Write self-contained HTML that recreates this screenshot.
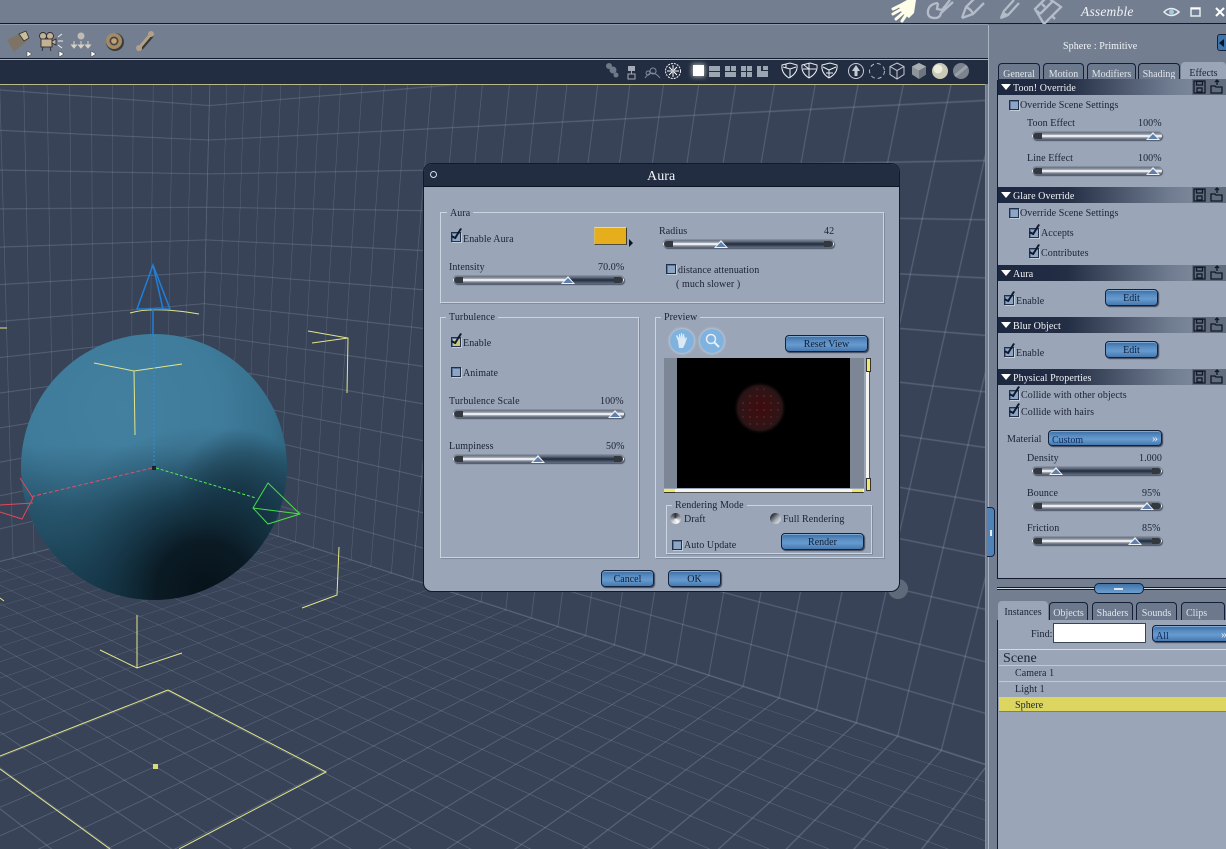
<!DOCTYPE html>
<html><head><meta charset="utf-8"><title>Aura</title>
<style>
html,body{margin:0;padding:0;background:#737f90;width:1226px;height:849px;overflow:hidden}
#r{position:relative;width:1226px;height:849px;overflow:hidden;background:#737f90;font:10px/12px "Liberation Serif",serif;color:#1b2335}
#r div,#r span,#r svg{position:absolute}
.t{white-space:nowrap;color:#1b2335;margin-top:4px;letter-spacing:.08px}
.w{color:#f2f4f7}
.vp{left:0;top:85px;width:986px;height:764px;overflow:hidden;background:#384357}
.g{transform-origin:0 0;background-image:linear-gradient(to right,rgba(160,174,194,.37) 1px,transparent 1px),linear-gradient(to bottom,rgba(160,174,194,.37) 1px,transparent 1px);background-size:40px 40px}
.wl{background-image:linear-gradient(to right,rgba(160,174,194,.3) 1px,transparent 1px),linear-gradient(to bottom,rgba(160,174,194,.3) 1px,transparent 1px)}
.box{border:1px solid #ccd4df;box-shadow:1px 1px 0 #7f8a9b}
.lg{background:#9aa5b7;padding:0 3px;white-space:nowrap}
.btn{background:linear-gradient(#3a6ca2,#5a8ec3 35%,#679ace 60%,#4679b0);border:1px solid #14233c;border-radius:4px;box-shadow:1px 1px 1px #3b4557,inset 0 1px 0 #7ea8d2;text-align:center;color:#0e1c33;box-sizing:border-box;line-height:18px}
.cb{width:8px;height:8px;border:1px solid #22304a;background:#8ea6c6;box-shadow:inset 1px 1px 0 #5f769a,1px 1px 0 #c3ccd9}
.ck::after{content:"";position:absolute;left:2px;top:-6px;width:5px;height:12px;border-right:2px solid #101a2c;border-bottom:2px solid #101a2c;transform:rotate(24deg) skewX(-8deg);box-sizing:border-box}
.sl{height:8px;border-radius:4px;background:linear-gradient(#667080,#8f97a5 28%,#fbfcfd 46%,#f2f4f7 56%,#8c94a1 72%,#4f5868);box-shadow:1px 1px 1px #4b5465,0 -1px 0 #848e9e}
.sl i{display:block;position:absolute;top:1px;bottom:1px;background:linear-gradient(#6a7587,#1f2b3e 50%,#566174)}
.sl b{position:absolute;left:1px;top:1px;width:9px;height:6px;background:#33383f;border-radius:3px 0 0 3px}
.sl u{position:absolute;right:1px;top:1px;width:9px;height:6px;background:#33383f;border-radius:0 3px 3px 0}
.sl s{position:absolute;top:0;width:0;height:0;margin-left:-2px;border-left:7px solid transparent;border-right:7px solid transparent;border-bottom:8px solid #eef1f5}
.sl s::after{content:"";position:absolute;left:-5px;top:2px;border-left:5px solid transparent;border-right:5px solid transparent;border-bottom:5px solid #5f7fae}
.hd{left:998px;width:228px;height:16px;background:linear-gradient(to right,#1c2740,#232e45 30%,#6f7b8f 75%,#8b96a8)}
.hd::before{content:"";position:absolute;left:3px;top:5px;border-left:5px solid transparent;border-right:5px solid transparent;border-top:6px solid #fff}
.ic{left:194px;top:0;width:34px;height:16px;background:#606b7c}
.tab{top:63px;height:17px;background:#6c788c;border:1px solid #14203a;border-bottom:0;border-radius:4px 4px 0 0;box-sizing:border-box;color:#e0e4ea;text-align:center;line-height:21px}
.on{background:#9aa5b7;color:#1b2335;border-color:#9aa5b7}
</style></head><body>
<div id="r">

<!-- viewport -->
<div class="vp"><div style="left:0;top:-85px;width:986px;height:849px">
<div class="g wl" style="left:0;top:0;width:1900px;height:1000px;transform:matrix3d(-0.46865,-0.0645,0,-0.0003275, -0.022,-0.8,0,-0.0002, 0,0,1,0, 199,511,0,1)"></div>
<div class="g wl" style="left:0;top:0;width:1900px;height:1000px;transform:matrix3d(0.29225,-0.0705,0,-0.000369, -0.022,-0.8,0,-0.0002, 0,0,1,0, 199,511,0,1)"></div>
<div class="g" style="left:0;top:0;width:2000px;height:2000px;background-color:#384357;transform:matrix3d(-0.46865,-0.0645,0,-0.0003275, 0.29225,-0.0705,0,-0.000369, 0,0,1,0, 199,511,0,1)"></div>

<svg style="left:0;top:0" width="986" height="849" viewBox="0 0 986 849">
<defs>
<radialGradient id="s1" gradientUnits="userSpaceOnUse" cx="125" cy="410" r="175"><stop offset="0" stop-color="#437f9f"/><stop offset=".55" stop-color="#3f7c9b"/><stop offset=".85" stop-color="#356f8c"/><stop offset="1" stop-color="#2c6079"/></radialGradient>
<radialGradient id="s2" gradientUnits="userSpaceOnUse" cx="205" cy="590" r="165"><stop offset="0" stop-color="#07121a"/><stop offset=".3" stop-color="#0a1922" stop-opacity=".96"/><stop offset=".6" stop-color="#123040" stop-opacity=".6"/><stop offset=".82" stop-color="#18394b" stop-opacity=".2"/><stop offset="1" stop-color="#1a3a4c" stop-opacity="0"/></radialGradient>
<radialGradient id="s3" gradientUnits="userSpaceOnUse" cx="240" cy="490" r="62"><stop offset="0" stop-color="#0d1e28" stop-opacity=".55"/><stop offset=".6" stop-color="#0d1e28" stop-opacity=".28"/><stop offset="1" stop-color="#0d1e28" stop-opacity="0"/></radialGradient>
<linearGradient id="s4" gradientUnits="userSpaceOnUse" x1="0" y1="445" x2="0" y2="600"><stop offset="0" stop-color="#123040" stop-opacity="0"/><stop offset=".4" stop-color="#123040" stop-opacity=".45"/><stop offset="1" stop-color="#123040" stop-opacity=".75"/></linearGradient>
</defs>
<circle cx="898" cy="589" r="10" fill="#5f6979"/>
<circle cx="154" cy="467" r="133" fill="url(#s1)"/>
<circle cx="154" cy="467" r="133" fill="url(#s4)"/>
<circle cx="154" cy="467" r="133" fill="url(#s3)"/>
<circle cx="154" cy="467" r="133" fill="url(#s2)"/>
<g fill="none" stroke="#e3e58a" stroke-width="1">
<path d="M94 363L134 371L182 364M134 371L135 435"/>
<path d="M130 313Q153 306 199 314"/>
<path d="M308 331L348 338L347 393M312 343L348 338"/>
<path d="M137 615L137 668M100 650L137 668L182 653"/>
<path d="M339 547L337 595L302 608"/>
<path d="M0 328L7 328M0 598L4 601"/>
<path d="M168 690L326 772L179 849M168 690L0 756M0 769L110 849"/>
</g>
<rect x="153" y="764" width="5" height="5" fill="#d9da7d"/>
<g fill="none" stroke="#1f7fd8" stroke-width="1.500">
<path d="M153 265L137 309L170 309Z M153 265L163 309"/>
<path d="M153 309V335"/>
<path d="M154 335V467" stroke-dasharray="2 2" stroke="#2f8fdc" stroke-width="1"/>
</g>
<path d="M152 468L30 497" fill="none" stroke="#e0506a" stroke-dasharray="4 2"/>
<path d="M20 478L33 498L22 519L0 512M0 505L33 503" fill="none" stroke="#e2485c"/>
<path d="M156 468L256 498" fill="none" stroke="#4ff04f" stroke-dasharray="3 2"/>
<path d="M268 483L300 514L268 524L253 508ZM253 508L300 514" fill="none" stroke="#46e046"/>
<rect x="152" y="466" width="4" height="4" fill="#1a2230"/>
</svg>
</div></div>

<!-- top bars -->
<div style="left:0;top:23px;width:1226px;height:1px;background:#0f1a2c"></div>
<div style="left:0;top:24px;width:988px;height:1px;background:#8f9aaa"></div>
<div style="left:0;top:58px;width:988px;height:1px;background:#0f1a2c"></div>
<div style="left:0;top:59px;width:988px;height:1px;background:#a5afbd"></div>
<div style="left:0;top:60px;width:988px;height:24px;background:#222d41"></div>
<div style="left:0;top:84px;width:986px;height:1px;background:#b9ba8b"></div>
<div style="left:985px;top:84px;width:1px;height:765px;background:#8f9170"></div>

<!-- left toolbar icons -->
<svg style="left:0;top:26px" width="170" height="32" viewBox="0 0 170 32">
<path d="M7 14L20 7L28 14L14 26Z" fill="#7d7465"/><path d="M19 8L26 5L29 12L24 15Z" fill="#c9bd9c" stroke="#2f2f2f" stroke-width=".8"/>
<path d="M27 25v6l5-3z" fill="#fff" stroke="#333" stroke-width=".5"/>
<g fill="#c4b296" stroke="#2f2d2d" stroke-width=".9"><circle cx="43" cy="10" r="3.500"/><circle cx="50" cy="10" r="3.500"/><rect x="41" y="13" width="11" height="8"/><path d="M52 15l4-2v6l-4-2zM43 21l-1 4M50 21l1 4"/></g>
<path d="M58 11l4-3M58 15h5M58 19l4 3" stroke="#eee" fill="none"/>
<path d="M59 25v6l5-3z" fill="#fff" stroke="#333" stroke-width=".5"/>
<circle cx="81" cy="10" r="3.500" fill="#c0bcb4"/><path d="M74 15v5M71.500 19l2.500 3 2.500-3zM81 15v5M78.500 19l2.500 3 2.500-3zM88 15v5M85.500 19l2.500 3 2.500-3z" stroke="#d6d1c4" fill="#d6d1c4"/>
<path d="M91 25v6l5-3z" fill="#fff" stroke="#333" stroke-width=".5"/>
<circle cx="115" cy="16" r="9" fill="#3e3d3c"/><circle cx="114" cy="15" r="8" fill="#a48b66"/><circle cx="114" cy="15" r="4.500" fill="#4a4641"/><circle cx="114" cy="15" r="2.800" fill="#bda27a"/>
<path d="M141 22L152 9" stroke="#3a3632" stroke-width="4.500"/><path d="M140 21L151 8" stroke="#b3a088" stroke-width="3"/><circle cx="139" cy="22" r="3" fill="#b3a088"/><circle cx="151" cy="8" r="3" fill="#b3a088"/>
</svg>

<!-- top right icons -->
<svg style="left:885px;top:0" width="341" height="24" viewBox="0 0 341 24">
<g fill="#fdfde8"><path d="M13 5L22 0H31L29 13L24 18L17 13Z"/><path d="M14 6L8 9M15 10L8 14M18 13L11 19M21 15L17 21" stroke="#fdfde8" stroke-width="3" stroke-linecap="round"/></g>
<g fill="none" stroke="#b4bcc9" stroke-width="2.300">
<path d="M53 3Q44 4 43 11T50 18Q55 18 56 13L68 2M53 3L52 9L57 10L65 0"/>
<path d="M77 18L81 7L90 -2M77 18L88 14L99 3M81 7Q86 9 88 14"/>
<path d="M116 18L119 11L129 0M116 18L123 15L134 3"/>
<path d="M150 9L162 -3L176 7L159 24ZM155 14L168 1M157 4L160 7M167 16L170 19M152 11L155 14"/>
</g>
<path d="M115 19L118 12L123 14L121 17Z" fill="#b4bcc9"/>
<g fill="none"><path d="M279 12Q286 5 294 12Q286 19 279 12Z" stroke="#e9edf3" stroke-width="1.500"/><circle cx="286.500" cy="12" r="2.500" fill="#9ecbe0"/>
<rect x="306" y="8" width="9" height="8" stroke="#e8ebf0" stroke-width="1.500"/><path d="M306 8.500h9" stroke="#fff" stroke-width="2"/>
<path d="M331 8l8 8M339 8l-8 8" stroke="#fff" stroke-width="2"/></g>
</svg>
<span class="t" style="left:1081px;top:1px;font:italic 13.500px/14px 'Liberation Serif',serif;color:#eef1f5;letter-spacing:.2px">Assemble</span>

<!-- viewport toolbar icons -->
<svg style="left:600px;top:60px" width="388" height="24" viewBox="0 0 388 24">
<defs><filter id="gl" x="-60%" y="-60%" width="220%" height="220%"><feGaussianBlur stdDeviation="2.500"/></filter></defs>
<g fill="#6f7987"><circle cx="9" cy="6" r="3"/><circle cx="13" cy="10" r="3.500"/><circle cx="16" cy="15" r="2.500"/></g>
<rect x="28" y="6" width="7" height="5" fill="#a3abb8"/><rect x="28" y="14" width="7" height="5" fill="none" stroke="#a3abb8"/><path d="M31.500 11v3" stroke="#a3abb8"/>
<path d="M45 18Q52 8 60 18M48 15a2 2 0 1 1 .1 0M53 14a3 3 0 1 1 .1 0" stroke="#7f8998" fill="none"/>
<g fill="none" stroke="#eef1f5" stroke-dasharray="2 1"><circle cx="73" cy="11" r="7.500"/></g><path d="M69 7l3 3M77 7l-3 3M69 15l3-3M77 15l-3-3M73 5v12M67 11h12" stroke="#fff" fill="none"/>
<rect x="92" y="4" width="13" height="13" fill="#fffbe0" filter="url(#gl)" opacity=".6"/>
<rect x="93" y="5" width="11" height="11" fill="#fff"/>
<g fill="#9ca5b2"><rect x="109" y="6" width="11" height="5"/><rect x="109" y="12" width="11" height="5"/>
<rect x="125" y="6" width="5" height="5"/><rect x="131" y="6" width="5" height="5"/><rect x="125" y="12" width="11" height="5"/>
<rect x="141" y="6" width="5" height="5"/><rect x="147" y="6" width="5" height="5"/><rect x="141" y="12" width="5" height="5"/><rect x="147" y="12" width="5" height="5"/>
<path d="M157 6h4v5h7v6h-11zM163 6h5v4h-5z"/></g>
<g fill="none" stroke="#e9edf2" stroke-width="1">
<path d="M182 5L190 3L197 5Q198 13 189 18Q181 13 182 5ZM183 7L190 9L196 7M190 9V18M186 4V8"/>
<path d="M202 5L210 3L217 5Q218 13 209 18Q201 13 202 5ZM203 9L216 9M209 3V18M204 5L209 9"/>
<path d="M222 5L230 3L237 5Q238 13 229 18Q221 13 222 5ZM229 10L223 7M229 10L236 7M229 10V18M226 13H233"/>
</g>
<circle cx="256" cy="11" r="7.500" fill="none" stroke="#c6ccd6"/><path d="M256 5l4 6h-2.500v5h-3v-5H252z" fill="#c6ccd6"/>
<circle cx="277" cy="11" r="7.500" fill="none" stroke="#aeb6c3" stroke-dasharray="4 3"/>
<path d="M297 3l7 3.500v8L297 19l-7-4.500v-8zM290 6.500l7 4 7-4M297 10.500V19" fill="none" stroke="#c6ccd6"/>
<path d="M319 3l7 3.500v8L319 19l-7-4.500v-8z" fill="#8e949c"/><path d="M312 6.500l7 4 7-4-7-3.500z" fill="#a9aeb3"/><path d="M319 10.500V19l7-4.500v-8z" fill="#6f757e"/>
<circle cx="340" cy="11" r="8" fill="#c9c9b8"/><circle cx="338" cy="9" r="4.500" fill="#ecebdc"/>
<circle cx="361" cy="11" r="8" fill="#7b838e"/><path d="M355 16L367 6" stroke="#99a0a8" stroke-width="3"/>
</svg>

<!-- right panel -->
<div style="left:988px;top:25px;width:1px;height:824px;background:#a9b2bf"></div>
<span class="t w" style="left:1063px;top:37px">Sphere : Primitive</span>
<div style="left:1217px;top:34px;width:12px;height:17px;background:#3f74aa;border:1px solid #14233c;border-radius:3px;box-sizing:border-box"></div>
<div style="left:1219px;top:39px;border-top:4px solid transparent;border-bottom:4px solid transparent;border-right:5px solid #0c1526"></div>
<div style="left:987px;top:507px;width:8px;height:50px;background:#4f82b6;border:1px solid #14233c;border-left:0;border-radius:0 4px 4px 0;box-sizing:border-box"></div>
<div style="left:990px;top:530px;width:2px;height:6px;background:#e9eef5"></div>

<div style="left:997px;top:80px;width:229px;height:499px;background:#9aa5b7;border-left:1px solid #111b2d;border-bottom:1px solid #111b2d;box-sizing:border-box"></div>
<div class="tab" style="left:998px;width:42px">General</div>
<div class="tab" style="left:1043px;width:41px">Motion</div>
<div class="tab" style="left:1087px;width:49px">Modifiers</div>
<div class="tab" style="left:1138px;width:42px">Shading</div>
<div class="tab on" style="left:1181px;width:45px;top:62px;height:18px">Effects</div>

<div class="hd" style="top:79px"><div class="ic"></div></div>
<span class="t w" style="left:1013px;top:79px">Toon! Override</span>
<div class="hd" style="top:187px"><div class="ic"></div></div>
<span class="t w" style="left:1013px;top:187px">Glare Override</span>
<div class="hd" style="top:265px"><div class="ic"></div></div>
<span class="t w" style="left:1013px;top:265px">Aura</span>
<div class="hd" style="top:317px"><div class="ic"></div></div>
<span class="t w" style="left:1013px;top:317px">Blur Object</span>
<div class="hd" style="top:369px"><div class="ic"></div></div>
<span class="t w" style="left:1013px;top:369px">Physical Properties</span>
<svg style="left:1192px;top:79px" width="34" height="310" viewBox="0 0 34 310">
<defs><g id="ii" fill="none" stroke="#10182a" stroke-width="1.300"><rect x="2" y="2" width="11" height="12"/><rect x="4.500" y="2.500" width="6" height="3.500"/><rect x="5" y="9" width="5" height="4"/><path d="M19 14V7h4l1 1h6v6zM25 6V1M23 3l2-2 2 2" /></g></defs>
<use href="#ii"/><use href="#ii" y="108"/><use href="#ii" y="186"/><use href="#ii" y="238"/><use href="#ii" y="290"/>
</svg>

<div class="cb" style="left:1009px;top:100px"></div><span class="t" style="left:1020px;top:96px">Override Scene Settings</span>
<span class="t" style="left:1027px;top:114px">Toon Effect</span><span class="t" style="left:1138px;top:114px">100%</span>
<div class="sl" style="left:1032px;top:132px;width:130px"><b></b><s style="left:116px"></s></div>
<span class="t" style="left:1027px;top:149px">Line Effect</span><span class="t" style="left:1138px;top:149px">100%</span>
<div class="sl" style="left:1032px;top:167px;width:130px"><b></b><s style="left:116px"></s></div>

<div class="cb" style="left:1009px;top:208px"></div><span class="t" style="left:1020px;top:204px">Override Scene Settings</span>
<div class="cb ck" style="left:1029px;top:228px"></div><span class="t" style="left:1041px;top:224px">Accepts</span>
<div class="cb ck" style="left:1029px;top:248px"></div><span class="t" style="left:1041px;top:244px">Contributes</span>

<div class="cb ck" style="left:1004px;top:295px"></div><span class="t" style="left:1016px;top:292px">Enable</span>
<div class="btn" style="left:1105px;top:289px;width:53px;height:17px">Edit</div>
<div class="cb ck" style="left:1004px;top:347px"></div><span class="t" style="left:1016px;top:344px">Enable</span>
<div class="btn" style="left:1105px;top:341px;width:53px;height:17px">Edit</div>

<div class="cb ck" style="left:1009px;top:390px"></div><span class="t" style="left:1021px;top:386px">Collide with other objects</span>
<div class="cb ck" style="left:1009px;top:407px"></div><span class="t" style="left:1021px;top:403px">Collide with hairs</span>
<span class="t" style="left:1007px;top:430px">Material</span>
<div class="btn" style="left:1048px;top:430px;width:114px;height:16px;text-align:left;padding-left:3px;color:#0d2a5c;line-height:19px">Custom<span style="right:3px;top:-2px;color:#e9eef5;font-size:12px">&#187;</span></div>
<span class="t" style="left:1027px;top:449px">Density</span><span class="t" style="left:1139px;top:449px">1.000</span>
<div class="sl" style="left:1032px;top:467px;width:130px"><i style="left:24px;right:9px"></i><b></b><u></u><s style="left:19px"></s></div>
<span class="t" style="left:1027px;top:484px">Bounce</span><span class="t" style="left:1142px;top:484px">95%</span>
<div class="sl" style="left:1032px;top:502px;width:130px"><i style="left:115px;right:9px"></i><b></b><u></u><s style="left:110px"></s></div>
<span class="t" style="left:1027px;top:519px">Friction</span><span class="t" style="left:1142px;top:519px">85%</span>
<div class="sl" style="left:1032px;top:537px;width:130px"><i style="left:103px;right:9px"></i><b></b><u></u><s style="left:98px"></s></div>

<div style="left:997px;top:587px;width:229px;height:1px;background:#0f1a2c"></div>
<div style="left:997px;top:588px;width:229px;height:1px;background:#d5dbe3"></div>
<div style="left:997px;top:589px;width:229px;height:1px;background:#0f1a2c"></div>
<div style="left:1094px;top:583px;width:50px;height:11px;background:linear-gradient(#3f74aa,#6c9fd0);border:1px solid #14233c;border-radius:5px;box-sizing:border-box"></div>
<div style="left:1114px;top:588px;width:9px;height:2px;background:#dfe6ef"></div>

<div style="left:997px;top:620px;width:229px;height:229px;background:#9aa5b7;border-left:1px solid #111b2d;box-sizing:border-box"></div>
<div class="tab on" style="left:998px;top:601px;width:50px;height:20px;border-color:#9aa5b7;line-height:21px">Instances</div>
<div class="tab" style="left:1049px;top:602px;width:39px;height:18px">Objects</div>
<div class="tab" style="left:1092px;top:602px;width:41px;height:18px">Shaders</div>
<div class="tab" style="left:1136px;top:602px;width:41px;height:18px">Sounds</div>
<div class="tab" style="left:1181px;top:602px;width:44px;height:18px;text-align:left;padding-left:4px">Clips</div>
<span class="t" style="left:1031px;top:625px">Find:</span>
<div style="left:1053px;top:623px;width:93px;height:20px;background:#fff;border:1px solid #3a4455;box-sizing:border-box"></div>
<div class="btn" style="left:1152px;top:625px;width:80px;height:17px;text-align:left;padding-left:3px;line-height:21px;color:#0d2a5c">All<span style="left:68px;top:-2px;color:#e9eef5;font-size:12px">&#187;</span></div>
<div style="left:999px;top:649px;width:227px;height:1px;background:#d5dbe3"></div>
<span class="t" style="left:1003px;top:647px;font-size:14px;line-height:15px">Scene</span>
<div style="left:999px;top:665px;width:227px;height:1px;background:#c3cad5"></div>
<span class="t" style="left:1015px;top:664px">Camera 1</span>
<div style="left:999px;top:681px;width:227px;height:1px;background:#c3cad5"></div>
<span class="t" style="left:1015px;top:680px">Light 1</span>
<div style="left:999px;top:697px;width:227px;height:15px;background:#dcd55f;border-bottom:1px solid #737f90;box-sizing:border-box"></div>
<span class="t" style="left:1015px;top:696px">Sphere</span>

<!-- dialog -->
<div style="left:423px;top:163px;width:477px;height:429px;background:#9aa5b7;border:1px solid #0f1a2c;border-radius:9px;box-sizing:border-box;overflow:hidden">
<div style="left:0;top:0;width:475px;height:22px;background:#222d41;border-bottom:1px solid #0c1424"></div></div>
<div style="left:430px;top:171px;width:5px;height:5px;border:1px solid #d9dee6;border-radius:50%;background:#222d41"></div>
<span class="t w" style="left:647px;top:165px;font-size:14px;line-height:15px">Aura</span>

<div class="box" style="left:440px;top:212px;width:442px;height:89px"></div>
<span class="t lg" style="left:447px;top:204px">Aura</span>
<div class="box" style="left:440px;top:317px;width:197px;height:239px"></div>
<span class="t lg" style="left:446px;top:308px">Turbulence</span>
<div class="box" style="left:655px;top:317px;width:227px;height:239px"></div>
<span class="t lg" style="left:661px;top:308px">Preview</span>

<div class="cb ck" style="left:451px;top:232px"></div><span class="t" style="left:463px;top:230px">Enable Aura</span>
<div style="left:594px;top:227px;width:33px;height:18px;background:#e6ae1d;border-top:1px solid #f3d98a;border-left:1px solid #d5b868;border-bottom:1px solid #4d4a42;border-right:1px solid #3e3b33;box-sizing:border-box"></div>
<div style="left:629px;top:239px;border-top:4px solid transparent;border-bottom:4px solid transparent;border-left:4px solid #0c1526"></div>
<span class="t" style="left:449px;top:258px">Intensity</span><span class="t" style="left:598px;top:258px">70.0%</span>
<div class="sl" style="left:453px;top:276px;width:171px"><i style="left:115px;right:9px"></i><b></b><u></u><s style="left:110px"></s></div>
<span class="t" style="left:659px;top:222px">Radius</span><span class="t" style="left:824px;top:222px">42</span>
<div class="sl" style="left:663px;top:240px;width:171px"><i style="left:58px;right:9px"></i><b></b><u></u><s style="left:53px"></s></div>
<div class="cb" style="left:666px;top:264px"></div><span class="t" style="left:678px;top:261px">distance attenuation</span>
<span class="t" style="left:676px;top:275px">( much slower )</span>

<div class="cb ck" style="left:451px;top:337px;background:#c8c878"></div><span class="t" style="left:463px;top:334px">Enable</span>
<div class="cb" style="left:451px;top:367px"></div><span class="t" style="left:463px;top:364px">Animate</span>
<span class="t" style="left:449px;top:392px">Turbulence Scale</span><span class="t" style="left:600px;top:392px">100%</span>
<div class="sl" style="left:453px;top:410px;width:171px"><b></b><s style="left:157px"></s></div>
<span class="t" style="left:449px;top:437px">Lumpiness</span><span class="t" style="left:606px;top:437px">50%</span>
<div class="sl" style="left:453px;top:455px;width:171px"><i style="left:85px;right:9px"></i><b></b><u></u><s style="left:80px"></s></div>

<!-- preview -->
<div style="left:670px;top:329px;width:24px;height:24px;border-radius:50%;background:#7fb2de;box-shadow:0 0 3px #dfe8f2"></div>
<div style="left:700px;top:329px;width:24px;height:24px;border-radius:50%;background:#7fb2de;box-shadow:0 0 3px #dfe8f2"></div>
<svg style="left:670px;top:329px" width="56" height="24" viewBox="0 0 56 24">
<path d="M8 12l-2-5 1-1 2 3V5l1 0 1 4V4h1l1 5V5h1l1 5 1-2 1 1-2 6-2 4h-4z" fill="#dce9f5"/>
<circle cx="41" cy="10" r="4.500" fill="none" stroke="#e6eff8" stroke-width="1.500"/><path d="M44 13l5 5" stroke="#e6eff8" stroke-width="2"/>
</svg>
<div class="btn" style="left:785px;top:335px;width:83px;height:17px">Reset View</div>
<div style="left:664px;top:358px;width:200px;height:130px;background:#7d8695"></div>
<div style="left:677px;top:358px;width:173px;height:130px;background:#000"></div>
<svg style="left:677px;top:358px" width="173" height="130" viewBox="0 0 173 130">
<defs><radialGradient id="ra"><stop offset="0" stop-color="#3d0b0e"/><stop offset=".6" stop-color="#331315"/><stop offset=".85" stop-color="#281416"/><stop offset="1" stop-color="#120809" stop-opacity="0"/></radialGradient>
<pattern id="dots" width="7" height="7" patternUnits="userSpaceOnUse"><circle cx="3" cy="3" r="1" fill="#7a2a30" opacity=".55"/></pattern></defs>
<circle cx="83" cy="50" r="26" fill="url(#ra)"/><circle cx="83" cy="50" r="20" fill="url(#dots)"/>
</svg>
<div style="left:866px;top:358px;width:3px;height:133px;background:#f4f5f0;border-right:1px solid #555"></div>
<div style="left:866px;top:358px;width:3px;height:12px;background:#efe96a;border:1px solid #333"></div>
<div style="left:866px;top:478px;width:3px;height:11px;background:#efe96a;border:1px solid #333"></div>
<div style="left:664px;top:489px;width:200px;height:3px;background:#f4f5f0;border-bottom:1px solid #555"></div>
<div style="left:664px;top:489px;width:11px;height:3px;background:#efe96a;border-bottom:1px solid #333"></div>
<div style="left:852px;top:489px;width:11px;height:3px;background:#efe96a;border-bottom:1px solid #333"></div>

<div class="box" style="left:666px;top:505px;width:204px;height:47px"></div>
<span class="t lg" style="left:672px;top:496px">Rendering Mode</span>
<div style="left:670px;top:513px;width:11px;height:11px;border-radius:50%;background:conic-gradient(#2b2f38,#fff 40%,#cfd3da 60%,#2b2f38)"></div>
<span class="t" style="left:684px;top:510px">Draft</span>
<div style="left:770px;top:513px;width:11px;height:11px;border-radius:50%;background:linear-gradient(135deg,#30343c 20%,#aab0ba 60%,#eef0f3)"></div>
<span class="t" style="left:783px;top:510px">Full Rendering</span>
<div class="cb" style="left:672px;top:540px"></div><span class="t" style="left:684px;top:536px">Auto Update</span>
<div class="btn" style="left:781px;top:533px;width:83px;height:17px">Render</div>
<div class="btn" style="left:601px;top:570px;width:53px;height:17px">Cancel</div>
<div class="btn" style="left:668px;top:570px;width:53px;height:17px">OK</div>

</div>
</body></html>
